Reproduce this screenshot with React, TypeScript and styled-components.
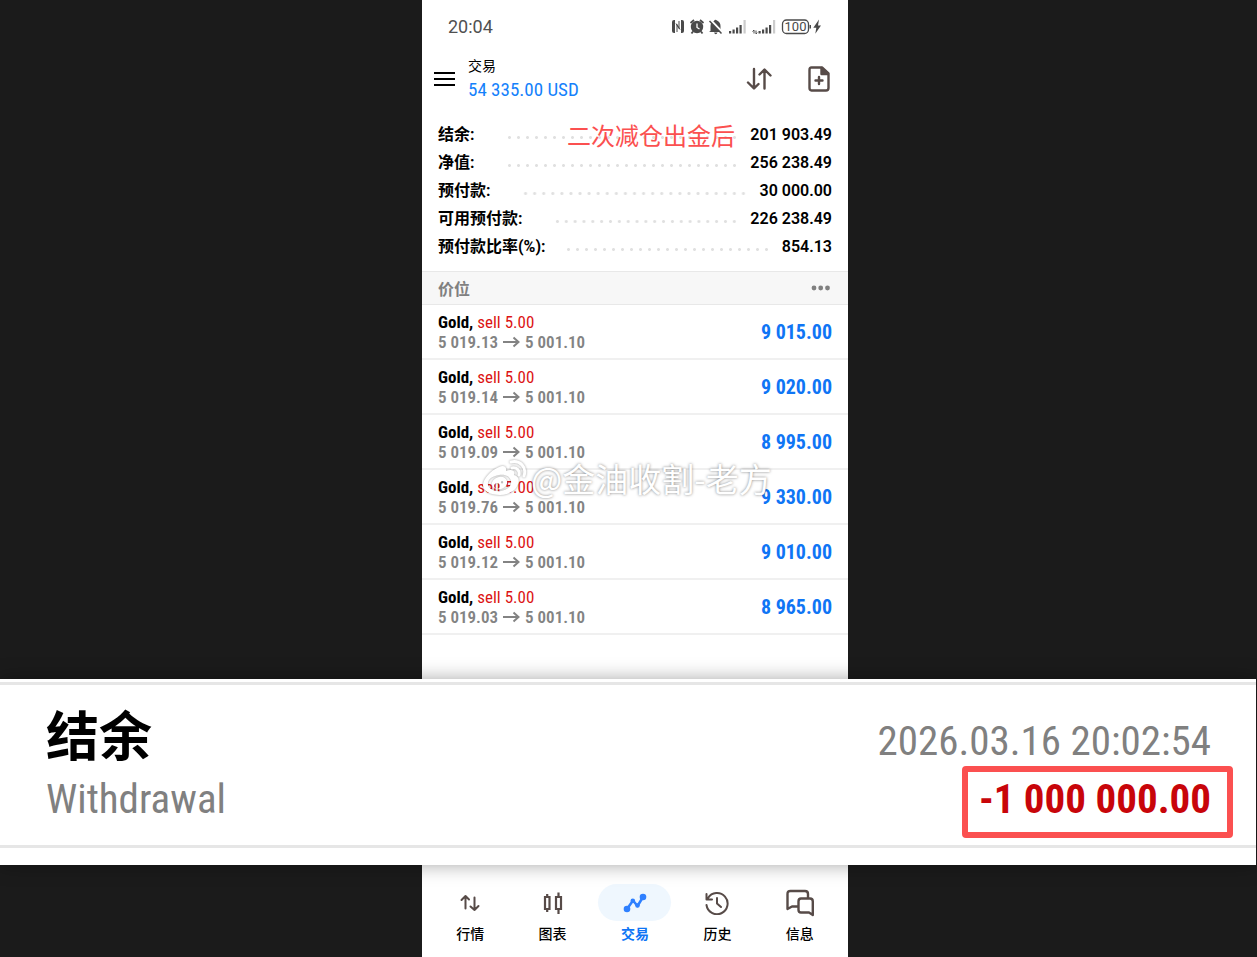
import React from 'react';
import styled, { createGlobalStyle } from 'styled-components';

const cjk = '"Noto Sans CJK SC", sans-serif';
const wide = `Roboto, ${cjk}`;
const narrow = `"Roboto Condensed", "Liberation Sans Narrow", Roboto, ${cjk}`;

const Global = createGlobalStyle`
  *, *::before, *::after { box-sizing: border-box; }
  html, body { margin: 0; padding: 0; background: #1b1b1b; }
  body { font-family: ${wide}; color: #000; }
  button { border: 0; padding: 0; background: none; font: inherit; color: inherit; cursor: pointer; }
  svg { display: block; }
`;

const Page = styled.main`
  display: flex;
  flex-direction: column;
  min-height: 100vh;
`;

const Stage = styled.div<{ $grow?: boolean }>`
  display: grid;
  grid-template-columns: 422fr 426fr 409fr;
  flex: ${(p) => (p.$grow ? '1' : 'none')};
`;

const Screen = styled.section`
  grid-column: 2;
  position: relative;
  background: #fff;
`;

const StatusBar = styled.div`
  display: flex;
  align-items: center;
  justify-content: space-between;
  height: 53px;
  padding: 0 25px 0 26px;
  color: #505050;
  font-size: 18px;
`;

const Header = styled.header`
  display: flex;
  align-items: center;
  height: 52px;
  padding: 0 18px 0 12px;
`;

const Account = styled.div`
  flex: 1;
  margin-left: 12px;
`;

const Title = styled.h1`
  margin: 0;
  font: 400 14px/22px ${cjk};
`;

const Total = styled.div`
  font: 400 19px/28px ${narrow};
  color: #1481fb;
`;

const HeaderActions = styled.div`
  display: flex;
  align-items: center;
  gap: 35px;
`;

const Summary = styled.dl`
  margin: 0;
  padding: 16px 16px 10px;
`;

const SummaryRow = styled.div`
  display: flex;
  align-items: center;
  height: 28px;
  font-size: 16px;
  line-height: 28px;
`;

const Label = styled.dt`
  font-weight: 700;
`;

const Leader = styled.span<{ $short?: boolean }>`
  flex: 1;
  height: 3px;
  margin: 5px 11px 0 ${(p) => (p.$short ? 18 : 30)}px;
  background: radial-gradient(circle, #e0e0e0 1px, transparent 2px) 0 0 / 9px 3px round;
`;

const Value = styled.dd`
  margin: 0;
  font-weight: 600;
`;

const Note = styled.p`
  position: absolute;
  top: 117px;
  left: 145px;
  margin: 0;
  font: 400 24px/36px ${cjk};
  color: #fb5050;
`;

const SectionHead = styled.div`
  display: flex;
  align-items: center;
  justify-content: space-between;
  height: 34px;
  padding: 0 17px 0 16px;
  background: #f7f7f7;
  border-top: 1px solid #e8e8e8;
  border-bottom: 1px solid #e8e8e8;
  color: #808080;
`;

const SectionTitle = styled.h2`
  margin: 0;
  font: 700 16px/32px ${cjk};
`;

const Positions = styled.ul`
  margin: 0;
  padding: 0 0 44px;
  list-style: none;
`;

const Position = styled.li`
  display: flex;
  align-items: center;
  justify-content: space-between;
  height: 55px;
  padding: 0 16px;
  border-bottom: 2px solid #f0f0f0;
  font-family: ${narrow};
  font-size: 17px;
  line-height: 20px;
`;

const Instrument = styled.div`
  font-weight: 700;
`;

const Side = styled.span`
  font-weight: 400;
  color: #dc1414;
`;

const Prices = styled.div`
  display: flex;
  align-items: center;
  gap: 5px;
  font-weight: 600;
  color: #838383;
`;

const Profit = styled.div`
  font-size: 20px;
  font-weight: 700;
  color: #0f75f5;
`;

const Watermark = styled.div`
  position: absolute;
  top: 455px;
  left: 60px;
  display: flex;
  align-items: center;
  gap: 3px;
  font: 400 33px/46px ${cjk};
  color: #fff;
  white-space: nowrap;
  text-shadow: 0 0 3px rgba(0, 0, 0, 0.5);
  svg { filter: drop-shadow(0 0 1px rgba(0, 0, 0, 0.4)); }
`;

const Banner = styled.section`
  position: relative;
  z-index: 1;
  margin-right: 1px;
  padding: 3px 0 17px;
  background: #fff;
  box-shadow: 0 0 18px rgba(0, 0, 0, 0.35);
`;

const Deal = styled.div`
  display: flex;
  justify-content: space-between;
  padding: 17px 23px 7px 46px;
  border-top: 3px solid #e6e6e6;
  border-bottom: 3px solid #e6e6e6;
  font-family: ${narrow};
  font-size: 41px;
  line-height: 70px;
  color: #808080;
`;

const DealTitle = styled.h2`
  margin: 0;
  font: 700 53px/62px ${cjk};
  color: #000;
`;

const DealSide = styled.div`
  display: flex;
  flex-direction: column;
  align-items: flex-end;
`;

const DealTime = styled.time`
  padding: 14px 22px 0 0;
  line-height: 50px;
`;

const Amount = styled.strong`
  border: 6px solid #fb5050;
  border-radius: 4px;
  padding: 0 16px 6px 11px;
  line-height: 54px;
  font-weight: 700;
  color: #c8050a;
`;

const Tabs = styled.nav`
  display: grid;
  grid-template-columns: repeat(5, 1fr);
  padding: 19px 7px 12px;
`;

const Tab = styled.button<{ $active?: boolean }>`
  display: flex;
  flex-direction: column;
  align-items: center;
  gap: 2px;
  font: ${(p) => (p.$active ? 700 : 500)} 14px/20px ${cjk};
  color: ${(p) => (p.$active ? '#0f75f5' : '#000')};
`;

const TabIcon = styled.span<{ $active?: boolean }>`
  display: grid;
  place-items: center;
  width: 73px;
  height: 37px;
  border-radius: 19px;
  background: ${(p) => (p.$active ? '#eff7fe' : 'transparent')};
  color: ${(p) => (p.$active ? '#2f80ff' : '#574b48')};
`;

const summary = [
  { label: '结余:', value: '201 903.49' },
  { label: '净值:', value: '256 238.49' },
  { label: '预付款:', value: '30 000.00' },
  { label: '可用预付款:', value: '226 238.49' },
  { label: '预付款比率(%):', value: '854.13', short: true },
];

const positions = [
  ['5 019.13', '9 015.00'],
  ['5 019.14', '9 020.00'],
  ['5 019.09', '8 995.00'],
  ['5 019.76', '9 330.00'],
  ['5 019.12', '9 010.00'],
  ['5 019.03', '8 965.00'],
];

const StatusIcons = () => (
  <svg width="152" height="18" viewBox="0 0 152 18" fill="#4a4a4a" role="img" aria-label="NFC, 100">
    <path d="M4 2v13H3Q1 15 1 13V4Q1 2 3 2zM13 4v9q0 2-2 2h-1V2h1q2 0 2 2z" />
    <path d="M6 14V6.500l3 5M5 5.500l3 5V3" fill="none" stroke="#4a4a4a" strokeWidth="1" />
    <path d="M19.500 5l3.500-3M32.500 5L29 2M22 13.500l-1.500 2M30 13.500l1.500 2" stroke="#4a4a4a" strokeWidth="1.800" />
    <circle cx="26" cy="9" r="6.200" />
    <path d="M26 5.500V9.500l2.500 1.500" fill="none" stroke="#fff" strokeWidth="1.300" />
    <path d="M39.500 13V8q0-4 3.500-5 1-2 3-.500 3.500 1.500 3.500 5.500v5l1.500 1H38zM43 14.500h3.500q-.500 1.700-1.700 1.700T43 14.500z" />
    <path d="M39.500 2l12 12.500" stroke="#fff" strokeWidth="2.500" />
    <path d="M38.500 3l12 12.500" stroke="#4a4a4a" strokeWidth="1.500" />
    <path d="M58 13h2.200v2.500H58zM61.500 11.500h2.200v4h-2.200zM65 9.500h2.200v6H65zM68.500 7h2.200v8.500h-2.200zM87.500 13h2.200v2.500h-2.200zM91 11.500h2.200v4H91zM94.500 9.500h2.200v6h-2.200zM98 7h2.200v8.500H98z" />
    <path d="M72.500 2h2.200v13.500h-2.200zM102 2h2.200v13.500H102z" fill="#ccc" />
    <path d="M83 12v3.500M81.500 13.500L83 12M85 12.500V16l1.300-1.300" fill="none" stroke="#4a4a4a" />
    <rect x="111.500" y="2" width="26" height="13.500" rx="4" fill="none" stroke="#4a4a4a" strokeWidth="1.300" />
    <text x="124.500" y="13.300" textAnchor="middle" fontFamily="Roboto, sans-serif" fontWeight="400" fontSize="13">100</text>
    <path d="M138.500 7h1.500v3.500h-1.500zM148 1.500L142.300 9.800h3l-1 6L150 7.500h-3z" />
  </svg>
);

const MenuIcon = () => (
  <svg width="22" height="16" viewBox="0 0 22 16" fill="none" stroke="#000" strokeWidth="2.200">
    <path d="M0 2h21M0 8h21M0 14h21" />
  </svg>
);

const SortIcon = () => (
  <svg width="28" height="26" viewBox="0 0 28 26" fill="none" stroke="#574b48" strokeWidth="2.400" strokeLinecap="round" strokeLinejoin="round">
    <path d="M9 3v19M3 16.500l6 6 4.500-4.500M19.500 22.500V4M14.500 8.500l5-5 6 6" />
  </svg>
);

const NewOrderIcon = () => (
  <svg width="22" height="26" viewBox="0 0 22 26" fill="none" stroke="#574b48" strokeWidth="2.400" strokeLinejoin="round" strokeLinecap="round">
    <path d="M3.500 1.500H14l6.500 6V22q0 2.500-2.500 2.500H3.500q-2 0-2-2.500V4q0-2.500 2-2.500z" />
    <path d="M13.500 2v6H20z" fill="#574b48" />
    <path d="M7.500 14.500h7M11 11v7" />
  </svg>
);

const ArrowIcon = () => (
  <svg width="17" height="12" viewBox="0 0 17 12" fill="none" stroke="#838383" strokeWidth="2">
    <path d="M0 6h15.500M10.500 1.500L15.500 6l-5 4.500" />
  </svg>
);

const MoreIcon = () => (
  <svg width="20" height="6" viewBox="0 0 20 6" fill="#808080">
    <circle cx="3" cy="3" r="2.400" />
    <circle cx="9.700" cy="3" r="2.400" />
    <circle cx="16.500" cy="3" r="2.400" />
  </svg>
);

const WeiboIcon = () => (
  <svg width="46" height="38" viewBox="0 0 46 38">
    <path
      fill="#fff"
      fillRule="evenodd"
      d="M17 8c4-2 8-1 7 4 5-2 10-1 8 4 4 1 6 4 4 9-2 7-10 11-18 11C8 36 1 32 1 26 1 20 9 11 17 8zM17 16C10 17 5 21 6 26c1 4 7 7 13 6s11-5 10-10-6-7-12-6z"
    />
    <path fill="#fff" fillRule="evenodd" d="M17 18c-5 1-8 5-7 8 1 4 5 5 9 4s7-5 6-8-4-5-8-4zm-2 6a3 3 0 1 0 .100 0zm5-2a1.200 1.200 0 1 0 .100 0z" />
    <path d="M29 3c9-2 16 5 13 14M30 9c5-1 8 3 7 7" fill="none" stroke="#fff" strokeWidth="3" strokeLinecap="round" />
  </svg>
);

const QuotesIcon = () => (
  <svg width="20" height="20" viewBox="0 0 20 20" fill="none" stroke="currentColor" strokeWidth="2" strokeLinecap="round" strokeLinejoin="round">
    <path d="M5.500 15.500V3M1.500 7l4-4 3.500 3.500M14.500 4.500V17M10.500 13.500l4 3.500 4-4" />
  </svg>
);

const ChartIcon = () => (
  <svg width="20" height="24" viewBox="0 0 20 24" fill="none" stroke="currentColor" strokeWidth="2.200">
    <path d="M2 6h4.500v12H2zM4.200 3v3M4.200 18v3M13 6h5v12h-5zM15.500 1.500V6M15.500 18v5" />
  </svg>
);

const TradeIcon = () => (
  <svg width="24" height="20" viewBox="0 0 24 20" fill="currentColor">
    <path d="M4 16L10 7.500l4.500 5.500L20 4" fill="none" stroke="currentColor" strokeWidth="2.500" strokeLinejoin="round" />
    <circle cx="4" cy="16" r="3.300" />
    <circle cx="20" cy="4" r="3.300" />
    <circle cx="9.800" cy="7.800" r="2.300" />
    <circle cx="14.500" cy="12.500" r="2.300" />
  </svg>
);

const HistoryIcon = () => (
  <svg width="24" height="24" viewBox="0 0 24 24" fill="none" stroke="currentColor" strokeWidth="2" strokeLinecap="round" strokeLinejoin="round">
    <path d="M1.500 14A10.600 10.600 0 1 0 3 7M1.500 3v5.500H7M12 7v5.500l4 3.500" />
  </svg>
);

const ChatIcon = () => (
  <svg width="28" height="28" viewBox="0 0 28 28" fill="none" stroke="currentColor" strokeWidth="2.400" strokeLinejoin="round">
    <path d="M12 17.500H6L1.500 20V5q0-3 3-3H19q3 0 3 3v4" />
    <path d="M15 9.500h9q2.800 0 2.800 3V26L23 23.500h-8q-2.500 0-2.500-2.500v-8.500q0-3 2.500-3z" />
  </svg>
);

const tabs = [
  { label: '行情', Icon: QuotesIcon },
  { label: '图表', Icon: ChartIcon },
  { label: '交易', Icon: TradeIcon, active: true },
  { label: '历史', Icon: HistoryIcon },
  { label: '信息', Icon: ChatIcon },
];

export default function App() {
  return (
    <Page lang="zh-CN">
      <Global />
      <Stage>
        <Screen>
          <StatusBar>
            <span>20:04</span>
            <StatusIcons />
          </StatusBar>
          <Header>
            <button aria-label="菜单"><MenuIcon /></button>
            <Account>
              <Title>交易</Title>
              <Total>54 335.00 USD</Total>
            </Account>
            <HeaderActions>
              <button aria-label="排序"><SortIcon /></button>
              <button aria-label="新订单"><NewOrderIcon /></button>
            </HeaderActions>
          </Header>
          <Summary>
            {summary.map(({ label, value, short }) => (
              <SummaryRow key={label}>
                <Label>{label}</Label>
                <Leader $short={short} />
                <Value>{value}</Value>
              </SummaryRow>
            ))}
          </Summary>
          <Note>二次减仓出金后</Note>
          <SectionHead>
            <SectionTitle>价位</SectionTitle>
            <button aria-label="更多"><MoreIcon /></button>
          </SectionHead>
          <Positions>
            {positions.map(([open, profit]) => (
              <Position key={open}>
                <div>
                  <Instrument>Gold, <Side>sell 5.00</Side></Instrument>
                  <Prices>
                    {open}
                    <ArrowIcon />
                    5 001.10
                  </Prices>
                </div>
                <Profit>{profit}</Profit>
              </Position>
            ))}
          </Positions>
          <Watermark>
            <WeiboIcon />
            @金油收割-老方
          </Watermark>
        </Screen>
      </Stage>
      <Banner>
        <Deal>
          <div>
            <DealTitle>结余</DealTitle>
            <div>Withdrawal</div>
          </div>
          <DealSide>
            <DealTime>2026.03.16 20:02:54</DealTime>
            <Amount>-1 000 000.00</Amount>
          </DealSide>
        </Deal>
      </Banner>
      <Stage $grow>
        <Screen>
          <Tabs>
            {tabs.map(({ label, Icon, active }) => (
              <Tab key={label} $active={active}>
                <TabIcon $active={active}><Icon /></TabIcon>
                {label}
              </Tab>
            ))}
          </Tabs>
        </Screen>
      </Stage>
    </Page>
  );
}
